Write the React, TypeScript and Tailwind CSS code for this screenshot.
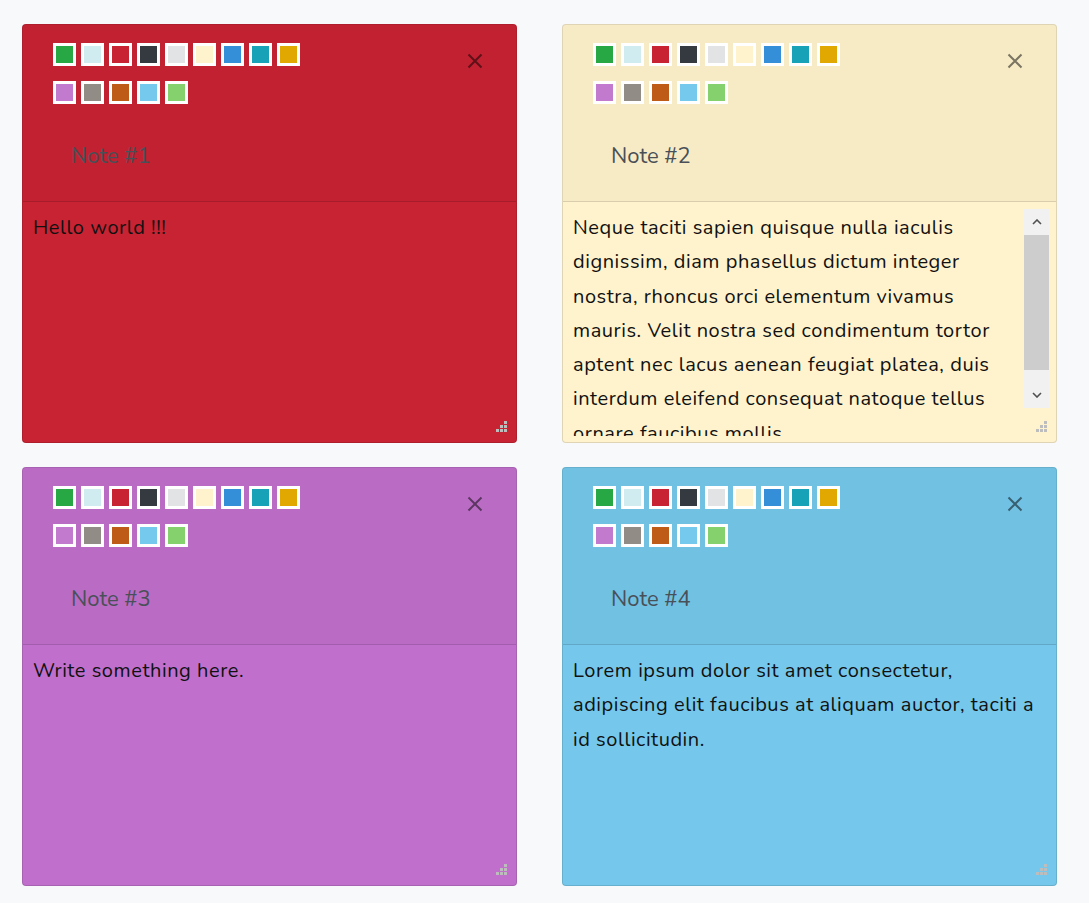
import React from "react";

const SWATCHES_1 = ["#28a745", "#d1ecf1", "#c82333", "#343a40", "#e2e3e5", "#fff3cd", "#348ed8", "#17a2b8", "#e0a800"];
const SWATCHES_2 = ["#c27acf", "#918c85", "#bd5b17", "#75c9ec", "#84d16d"];

type Note = {
  title: string;
  bg: string;
  lines: string[];
  scroll?: boolean;
};

const notes: Note[] = [
  { title: "Note #1", bg: "bg-[#c82333]", lines: ["Hello world !!!"] },
  {
    title: "Note #2",
    bg: "bg-[#fff3cd]",
    scroll: true,
    lines: [
      "Neque taciti sapien quisque nulla iaculis",
      "dignissim, diam phasellus dictum integer",
      "nostra, rhoncus orci elementum vivamus",
      "mauris. Velit nostra sed condimentum tortor",
      "aptent nec lacus aenean feugiat platea, duis",
      "interdum eleifend consequat natoque tellus",
      "ornare faucibus mollis.",
    ],
  },
  { title: "Note #3", bg: "bg-[#c070cc]", lines: ["Write something here."] },
  {
    title: "Note #4",
    bg: "bg-[#75c8eb]",
    lines: [
      "Lorem ipsum dolor sit amet consectetur,",
      "adipiscing elit faucibus at aliquam auctor, taciti a",
      "id sollicitudin.",
    ],
  },
];

function Swatch({ color }: { color: string }) {
  return (
    <div className="w-[23px] h-[23px] border-[3px] border-white shrink-0" style={{ backgroundColor: color }} />
  );
}

function Grip() {
  const dot = "w-[3px] h-[3px] bg-[#bdbdbd]";
  return (
    <div className="absolute right-[9px] bottom-[10px] flex flex-col items-end gap-[1px]">
      <div className="flex gap-[1px]">
        <div className={dot} />
      </div>
      <div className="flex gap-[1px]">
        <div className={dot} />
        <div className={dot} />
      </div>
      <div className="flex gap-[1px]">
        <div className={dot} />
        <div className={dot} />
        <div className={dot} />
      </div>
    </div>
  );
}

function Scrollbar() {
  return (
    <div className="absolute right-[7px] top-[7px] w-[25px] h-[199px] bg-[#f1f1f1] flex flex-col">
      <div className="h-[26px] flex items-center justify-center">
        <svg width="10" height="6" viewBox="0 0 10 6">
          <path d="M1 5 L5 1 L9 5" fill="none" stroke="#505050" strokeWidth="1.6" />
        </svg>
      </div>
      <div className="h-[135px] bg-[#cdcdcd]" />
      <div className="flex-1" />
      <div className="h-[27px] flex items-center justify-center">
        <svg width="10" height="6" viewBox="0 0 10 6">
          <path d="M1 1 L5 5 L9 1" fill="none" stroke="#505050" strokeWidth="1.6" />
        </svg>
      </div>
    </div>
  );
}

function Card({ note }: { note: Note }) {
  return (
    <div className={`relative h-[419px] rounded-[4px] border border-black/[.125] flex flex-col overflow-hidden ${note.bg}`}>
      <div className="relative h-[177px] shrink-0 bg-black/[.03] border-b border-black/[.125]">
        <div className="pl-[30px] pt-[18px] flex flex-col gap-[15px]">
          <div className="flex gap-[5px]">
            {SWATCHES_1.map((c) => (
              <Swatch key={c} color={c} />
            ))}
          </div>
          <div className="flex gap-[5px]">
            {SWATCHES_2.map((c) => (
              <Swatch key={c} color={c} />
            ))}
          </div>
        </div>
        <div className="pl-[48px] mt-[34px] text-[22px] leading-[36px] text-[#495057]">{note.title}</div>
        <button className="absolute right-[33px] top-[28px] w-[16px] h-[16px] flex items-center justify-center opacity-50">
          <svg width="16" height="16" viewBox="0 0 16 16">
            <path d="M1.5 1.5 L14.5 14.5 M14.5 1.5 L1.5 14.5" stroke="#000" strokeWidth="2" fill="none" />
          </svg>
        </button>
      </div>
      <div className="relative flex-1">
        <div className="absolute left-0 right-0 top-0 bottom-[6px] overflow-hidden pt-[9px] pl-[10px] text-[20px] leading-[34.3px] tracking-[0.55px] text-[#111]">
          {note.lines.map((l, i) => (
            <div key={i} className="whitespace-nowrap">
              {l}
            </div>
          ))}
        </div>
        {note.scroll && <Scrollbar />}
        <Grip />
      </div>
    </div>
  );
}

export default function App() {
  return (
    <div className="min-h-[903px] bg-[#f8f9fa] pt-[24px] pl-[22px]" style={{ fontFamily: "Nunito, Lato, 'Noto Sans', sans-serif" }}>
      <div className="grid grid-cols-[495px_495px] gap-x-[45px] gap-y-[24px]">
        {notes.map((n) => (
          <Card key={n.title} note={n} />
        ))}
      </div>
    </div>
  );
}
